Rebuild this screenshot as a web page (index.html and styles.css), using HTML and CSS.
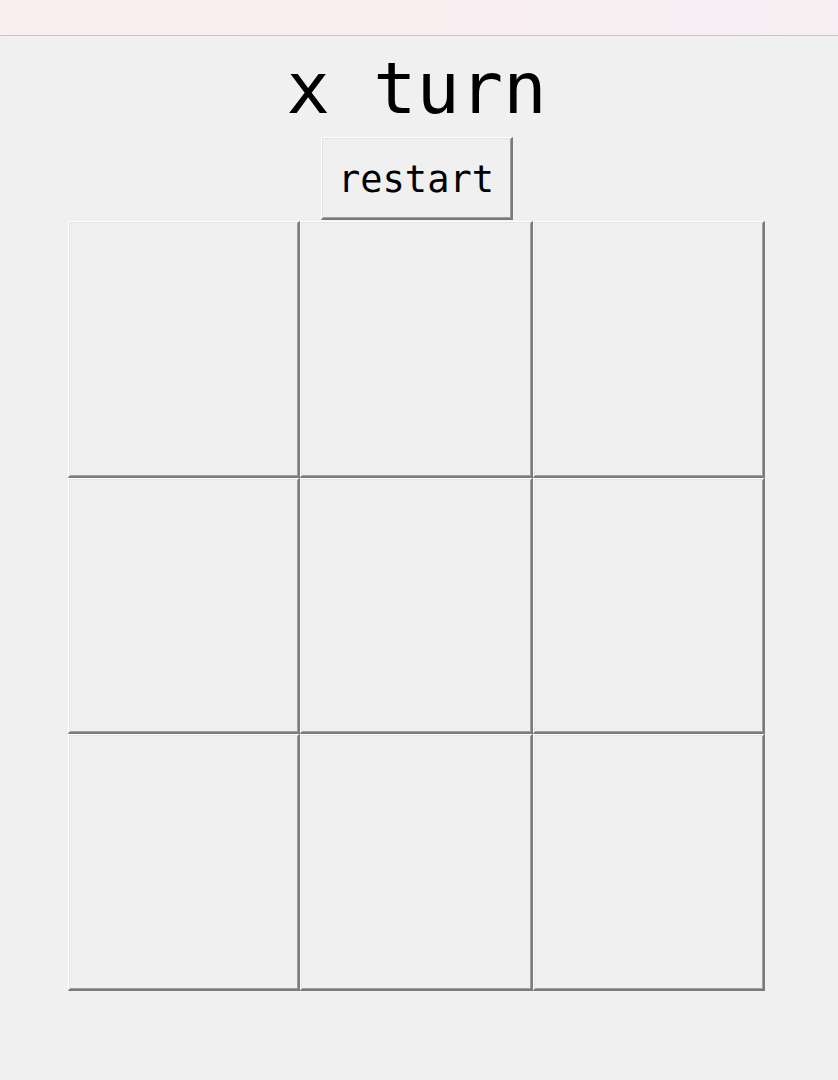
FILE: index.html
```html
<!DOCTYPE html>
<html lang="en">
<head>
  <meta charset="UTF-8">
  <meta name="viewport" content="width=device-width, initial-scale=1.0">
  <title>tic tac toe</title>
  <link rel="stylesheet" href="styles.css">
</head>
<body>
  <div class="titlebar"></div>
  <div class="window">
    <div id="status" class="status">x turn</div>
    <button class="tk-btn restart" onclick="restart()">restart</button>
    <div class="board" id="board">
      <button class="tk-btn cell" data-i="0"></button>
      <button class="tk-btn cell" data-i="1"></button>
      <button class="tk-btn cell" data-i="2"></button>
      <button class="tk-btn cell" data-i="3"></button>
      <button class="tk-btn cell" data-i="4"></button>
      <button class="tk-btn cell" data-i="5"></button>
      <button class="tk-btn cell" data-i="6"></button>
      <button class="tk-btn cell" data-i="7"></button>
      <button class="tk-btn cell" data-i="8"></button>
    </div>
  </div>

  <script>
    const cells = document.querySelectorAll(".cell");
    const status = document.getElementById("status");
    let player = "x";
    let done = false;

    const lines = [
      [0, 1, 2], [3, 4, 5], [6, 7, 8],
      [0, 3, 6], [1, 4, 7], [2, 5, 8],
      [0, 4, 8], [2, 4, 6]
    ];

    function winner() {
      for (const [a, b, c] of lines) {
        const v = cells[a].innerText;
        if (v && v === cells[b].innerText && v === cells[c].innerText) return v;
      }
      return null;
    }

    cells.forEach((cell) => {
      cell.addEventListener("click", () => {
        if (done || cell.innerText) return;
        cell.innerText = player;
        const w = winner();
        if (w) {
          status.innerText = `${w} wins`;
          done = true;
        } else if ([...cells].every((c) => c.innerText)) {
          status.innerText = "tie";
          done = true;
        } else {
          player = player === "x" ? "o" : "x";
          status.innerText = `${player} turn`;
        }
      });
    });

    function restart() {
      cells.forEach((c) => (c.innerText = ""));
      player = "x";
      done = false;
      status.innerText = "x turn";
    }
  </script>
</body>
</html>
```

FILE: styles.css
```css
body {
  margin: 0;
  padding: 0;
  background-color: #f0f0f0;
  font-family: "DejaVu Sans Mono", "Liberation Mono", monospace;
  color: #000;
}
.titlebar {
  height: 35px;
  background: linear-gradient(to right, #f9efef, #f8eef1 60%, #f5eff3);
  border-bottom: 1px solid #c6c6c6;
}
.window {
  width: 833px;
  display: flex;
  flex-direction: column;
  align-items: center;
}
.status {
  font-size: 72px;
  line-height: 84px;
  margin-top: 10px;
  margin-bottom: 7px;
}
.tk-btn {
  background-color: #f0f0f0;
  font-family: inherit;
  color: #000;
  padding: 0;
  border-top: 1px solid #ffffff;
  border-left: 1px solid #ffffff;
  border-right: 2px solid #7a7a7a;
  border-bottom: 2px solid #7a7a7a;
  box-shadow: inset 1px 1px 0 #e3e3e3, inset -1px -1px 0 #a0a0a0;
  box-sizing: border-box;
  cursor: pointer;
}
.restart {
  width: 192px;
  height: 83px;
  font-size: 37px;
  padding-top: 3px;
  margin-bottom: 1px;
}
.board {
  width: 697px;
  height: 770px;
  display: grid;
  grid-template-columns: repeat(3, 1fr);
  grid-template-rows: repeat(3, 1fr);
}
.cell {
  font-size: 120px;
  width: 100%;
  height: 100%;
}
```
